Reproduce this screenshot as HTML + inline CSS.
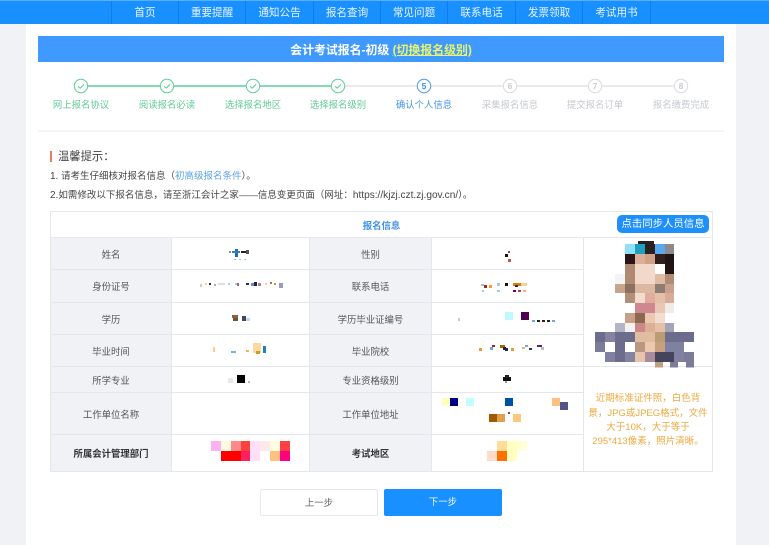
<!DOCTYPE html>
<html lang="zh-CN">
<head>
<meta charset="utf-8">
<title>会计考试报名</title>
<style>
html,body{margin:0;padding:0;width:769px;height:545px;overflow:hidden;background:#f0f2f5;}
#page{position:absolute;left:0;top:0;width:769px;height:545px;overflow:hidden;filter:blur(.35px);font-family:"Liberation Sans","Noto Sans CJK SC",sans-serif;color:#444;}
.a{position:absolute;white-space:nowrap;}
#nav{position:absolute;left:0;top:0;width:769px;height:24px;background:#1890ff;border-top:1px solid #5ab0ff;box-sizing:border-box;}
#nav span{position:absolute;top:0;height:23px;line-height:25px;text-align:center;font-size:10.6px;color:#eaf4ff;border-right:1px solid #0f7fe6;box-sizing:border-box;}
#wrap{position:absolute;left:26px;top:24px;width:710px;height:521px;background:#fff;}
#head{position:absolute;left:38px;top:36px;width:686px;height:26px;line-height:28px;background:#4099ff;color:#fff;font-size:11.9px;font-weight:bold;text-align:center;}
#head a{color:#e8f56a;text-decoration:underline;}
.st{position:absolute;top:98px;width:86px;text-align:center;font-size:9.4px;line-height:13px;}
.g{color:#62c996}.b{color:#4a94e0}.n{color:#c4c8ce}
table{position:absolute;left:50px;top:211px;width:663px;border-collapse:collapse;table-layout:fixed;font-size:9.4px;color:#555;}
td{border:1px solid #e4e7ed;padding:0;text-align:center;}
td.l{background:#f0f2f5;}
td.bd{font-weight:bold;color:#333;}
#sync{position:absolute;left:617px;top:215px;width:92px;height:18px;line-height:20px;border-radius:5px;background:#1f90fb;color:#fff;font-size:10.4px;text-align:center;}
.btn{position:absolute;top:489px;width:118px;height:27px;line-height:26px;box-sizing:border-box;border-radius:2px;text-align:center;font-size:9.4px;}
svg{position:absolute;left:0;top:0;}
</style>
</head>
<body>
<div id="page">
<div id="nav">
<span style="left:111px;width:68px;border-left:1px solid #0f7fe6">首页</span>
<span style="left:179px;width:67px">重要提醒</span>
<span style="left:246px;width:68px">通知公告</span>
<span style="left:314px;width:67px">报名查询</span>
<span style="left:381px;width:67px">常见问题</span>
<span style="left:448px;width:68px">联系电话</span>
<span style="left:516px;width:67px">发票领取</span>
<span style="left:583px;width:68px">考试用书</span>
</div>
<div id="wrap"></div>
<div id="head">会计考试报名-初级 <a>(切换报名级别)</a></div>

<svg width="769" height="545" viewBox="0 0 769 545" fill="none">
<line x1="81" y1="86" x2="338" y2="86" stroke="#3fc483" stroke-width="1.2"/>
<line x1="338" y1="86" x2="681" y2="86" stroke="#d4d6da" stroke-width="1"/>
<g fill="#fff" stroke="#5fd09a" stroke-width="1">
<circle cx="81" cy="86" r="6.7"/><circle cx="167" cy="86" r="6.7"/><circle cx="253" cy="86" r="6.7"/><circle cx="338" cy="86" r="6.7"/>
</g>
<g stroke="#5cc893" stroke-width="1" fill="none">
<path d="M78 86.2l2.2 2 3.8-3.8"/><path d="M164 86.2l2.2 2 3.8-3.8"/><path d="M250 86.2l2.2 2 3.8-3.8"/><path d="M335 86.2l2.2 2 3.8-3.8"/>
</g>
<circle cx="424" cy="86" r="6.7" fill="#fff" stroke="#4a9bf0" stroke-width="1"/>
<g fill="#fff" stroke="#d8dade" stroke-width="1">
<circle cx="510" cy="86" r="6.7"/><circle cx="595" cy="86" r="6.7"/><circle cx="681" cy="86" r="6.7"/>
</g>
<g font-family="Liberation Sans,sans-serif" font-size="8.5" text-anchor="middle" font-weight="bold">
<text x="424" y="89" fill="#3d8fe8">5</text>
<text x="510" y="89" fill="#c8cbd0">6</text>
<text x="595" y="89" fill="#c8cbd0">7</text>
<text x="681" y="89" fill="#c8cbd0">8</text>
</g>
<rect x="38" y="130.5" width="686" height="1.2" fill="#eceef1"/>
</svg>

<div class="st g" style="left:38px">网上报名协议</div>
<div class="st g" style="left:124px">阅读报名必读</div>
<div class="st g" style="left:210px">选择报名地区</div>
<div class="st g" style="left:295px">选择报名级别</div>
<div class="st b" style="left:381px">确认个人信息</div>
<div class="st n" style="left:467px">采集报名信息</div>
<div class="st n" style="left:552px">提交报名订单</div>
<div class="st n" style="left:638px">报名缴费完成</div>

<div class="a" style="left:50px;top:151px;width:2.4px;height:11px;background:#ea7a68"></div>
<div class="a" style="left:58px;top:148.5px;font-size:11.3px;line-height:16px;color:#444">温馨提示：</div>
<div class="a" style="left:50px;top:170px;font-size:9.5px;line-height:13px;color:#444"><span style="font-size:10px">1.</span> 请考生仔细核对报名信息（<span style="color:#5aa0e6">初高级报名条件</span>）。</div>
<div class="a" style="left:50px;top:188.5px;font-size:9.5px;line-height:13px;color:#444"><span style="font-size:10px">2.</span>如需修改以下报名信息，请至浙江会计之家——信息变更页面（网址：<span style="font-size:10.1px">https://kjzj.czt.zj.gov.cn/</span>）。</div>

<table>
<colgroup><col style="width:121px"><col style="width:138px"><col style="width:122px"><col style="width:152px"><col style="width:129px"></colgroup>
<tr style="height:26px"><td colspan="5" style="font-weight:bold;color:#3f92e6">报名信息</td></tr>
<tr style="height:32px"><td class="l">姓名</td><td></td><td class="l">性别</td><td></td><td rowspan="4"></td></tr>
<tr style="height:33px"><td class="l">身份证号</td><td></td><td class="l">联系电话</td><td></td></tr>
<tr style="height:32px"><td class="l">学历</td><td></td><td class="l">学历毕业证编号</td><td></td></tr>
<tr style="height:32px"><td class="l">毕业时间</td><td></td><td class="l">毕业院校</td><td></td></tr>
<tr style="height:26px"><td class="l">所学专业</td><td></td><td class="l">专业资格级别</td><td></td>
<td rowspan="3" style="color:#efa83e;line-height:14.3px;padding:4px 0 0;font-size:9.5px;white-space:nowrap">近期标准证件照，白色背<br>景，JPG或JPEG格式，文件<br>大于10K，大于等于<br>295*413像素，照片清晰。</td></tr>
<tr style="height:42px"><td class="l">工作单位名称</td><td></td><td class="l">工作单位地址</td><td></td></tr>
<tr style="height:37px"><td class="l bd">所属会计管理部门</td><td></td><td class="l bd">考试地区</td><td></td></tr>
</table>
<div id="sync">点击同步人员信息</div>

<svg width="769" height="545" viewBox="0 0 769 545" shape-rendering="crispEdges">
<!-- 头像 -->
<rect x="638" y="241" width="16" height="3" fill="#262022"/>
<rect x="625" y="244" width="10" height="10" fill="#8fe0f8"/><rect x="635" y="244" width="10" height="10" fill="#20a0c0"/><rect x="645" y="244" width="10" height="10" fill="#2a2020"/><rect x="655" y="244" width="10" height="10" fill="#5aa8f0"/><rect x="665" y="244" width="9" height="10" fill="#8f8a8a"/>
<rect x="625" y="254" width="10" height="10" fill="#2a1518"/><rect x="635" y="254" width="10" height="10" fill="#dcb098"/><rect x="645" y="254" width="10" height="10" fill="#d0a088"/><rect x="655" y="254" width="10" height="10" fill="#30201c"/><rect x="665" y="254" width="9" height="10" fill="#201414"/>
<rect x="625" y="264" width="10" height="10" fill="#b08a70"/><rect x="635" y="264" width="20" height="10" fill="#f2d8c8"/><rect x="665" y="264" width="9" height="10" fill="#201414"/>
<rect x="615" y="274" width="10" height="10" fill="#f4f4f4"/><rect x="625" y="274" width="10" height="10" fill="#b08a70"/><rect x="635" y="274" width="20" height="10" fill="#f2d8c8"/><rect x="655" y="274" width="10" height="10" fill="#e0bca4"/><rect x="665" y="274" width="9" height="10" fill="#b08c74"/>
<rect x="615" y="284" width="10" height="9" fill="#c8a48c"/><rect x="625" y="284" width="10" height="9" fill="#8c7060"/><rect x="635" y="284" width="20" height="9" fill="#dcb8a0"/><rect x="655" y="284" width="10" height="9" fill="#8c7c74"/><rect x="665" y="284" width="9" height="9" fill="#c8a08c"/>
<rect x="625" y="293" width="10" height="10" fill="#b09078"/><rect x="635" y="293" width="10" height="10" fill="#f4dccc"/><rect x="645" y="293" width="10" height="10" fill="#e0aca0"/><rect x="655" y="293" width="10" height="10" fill="#e4c0a8"/><rect x="665" y="293" width="9" height="10" fill="#d8ac98"/>
<rect x="635" y="303" width="20" height="10" fill="#d08890"/><rect x="655" y="303" width="10" height="10" fill="#e8c8b4"/><rect x="665" y="303" width="9" height="10" fill="#f0ece8"/>
<rect x="625" y="313" width="10" height="10" fill="#c8a088"/><rect x="635" y="313" width="10" height="10" fill="#8c6850"/><rect x="645" y="313" width="10" height="10" fill="#ecc8b4"/><rect x="655" y="313" width="10" height="10" fill="#f4dcd0"/>
<rect x="615" y="323" width="10" height="9" fill="#b4b4c8"/><rect x="625" y="323" width="10" height="9" fill="#f4f2f0"/><rect x="635" y="323" width="10" height="9" fill="#cc8888"/><rect x="645" y="323" width="10" height="9" fill="#dcb094"/><rect x="655" y="323" width="10" height="9" fill="#e4c0a8"/><rect x="665" y="323" width="9" height="9" fill="#a4a4b8"/>
<rect x="595" y="332" width="10" height="10" fill="#6c6c8c"/><rect x="605" y="332" width="10" height="10" fill="#8484a0"/><rect x="615" y="332" width="20" height="10" fill="#6c6c8c"/><rect x="635" y="332" width="20" height="10" fill="#e0bca0"/><rect x="655" y="332" width="10" height="10" fill="#bc9c74"/><rect x="665" y="332" width="29" height="10" fill="#6c6c8c"/>
<rect x="595" y="342" width="10" height="10" fill="#7c7c98"/><rect x="615" y="342" width="10" height="10" fill="#6c6c8c"/><rect x="635" y="342" width="10" height="10" fill="#b89880"/><rect x="645" y="342" width="10" height="10" fill="#ecc8b0"/><rect x="655" y="342" width="10" height="10" fill="#c8a080"/><rect x="665" y="342" width="19" height="10" fill="#8080a0"/>
<rect x="605" y="352" width="10" height="10" fill="#8080a0"/><rect x="615" y="352" width="10" height="10" fill="#6c6c8c"/><rect x="625" y="352" width="10" height="10" fill="#8484a0"/><rect x="635" y="352" width="10" height="10" fill="#e8c4ac"/><rect x="645" y="352" width="10" height="10" fill="#a88c9c"/><rect x="655" y="352" width="19" height="10" fill="#44445c"/><rect x="674" y="352" width="10" height="10" fill="#8080a0"/><rect x="684" y="352" width="10" height="10" fill="#7c7c98"/>
<rect x="655" y="362" width="8" height="5.5" fill="#c0a080"/><rect x="670" y="362" width="8" height="5.5" fill="#7c7c98"/><rect x="686" y="362" width="8" height="5.5" fill="#7c7c98"/>
<!-- 姓名 -->
<rect x="229" y="251" width="2" height="2" fill="#888"/><rect x="235" y="249" width="3" height="8" fill="#2070b0"/><rect x="232" y="251" width="8" height="2" fill="#3080c0"/><rect x="241" y="251" width="8" height="2" fill="#222"/><rect x="246" y="250" width="3" height="4" fill="#555"/><rect x="234" y="259" width="2" height="1" fill="#8cc"/><rect x="239" y="259" width="2" height="1" fill="#8cc"/><rect x="244" y="259" width="2" height="1" fill="#8cc"/>
<!-- 身份证号 -->
<rect x="200" y="284" width="2" height="3" fill="#ccc"/><rect x="205" y="283" width="2" height="2" fill="#fc9"/><rect x="209" y="283" width="2" height="2" fill="#333"/><rect x="214" y="284" width="2" height="2" fill="#aac"/><rect x="218" y="283" width="7" height="2" fill="#ddd"/><rect x="228" y="283" width="2" height="2" fill="#ace"/><rect x="235" y="283" width="2" height="2" fill="#ace"/><rect x="237" y="283" width="2" height="3" fill="#a66"/><rect x="246" y="283" width="3" height="2" fill="#333"/><rect x="251" y="283" width="3" height="3" fill="#68c"/><rect x="254" y="282" width="3" height="4" fill="#224"/><rect x="258" y="283" width="3" height="3" fill="#a88"/><rect x="265" y="283" width="2" height="2" fill="#fc9"/><rect x="270" y="282" width="2" height="2" fill="#a66"/><rect x="274" y="283" width="2" height="2" fill="#c93"/><rect x="279" y="283" width="4" height="5" fill="#99b"/>
<!-- 学历 -->
<rect x="232" y="315" width="6" height="3" fill="#864"/><rect x="233" y="318" width="5" height="3" fill="#654"/><rect x="242" y="316" width="4" height="5" fill="#446"/><rect x="246" y="318" width="4" height="3" fill="#bde"/>
<!-- 毕业时间 -->
<rect x="213" y="347" width="2" height="5" fill="#fc8"/><rect x="231" y="351" width="5" height="2" fill="#6bd"/><rect x="246" y="350" width="3" height="2" fill="#fa5"/><rect x="253" y="343" width="8" height="10" fill="#fdd9a0"/><rect x="256" y="351" width="4" height="3" fill="#c93"/><rect x="263" y="346" width="3" height="7" fill="#2080c0"/>
<!-- 所学专业 -->
<rect x="228" y="378" width="5" height="5" fill="#e8e8e8"/><rect x="237" y="375" width="8" height="8" fill="#000"/><rect x="248" y="381" width="2" height="2" fill="#bbb"/>
<!-- 所属 -->
<rect x="211" y="441" width="10" height="10" fill="#ffb0f0"/><rect x="221" y="441" width="10" height="10" fill="#fffae0"/><rect x="231" y="441" width="10" height="10" fill="#ff8888"/><rect x="241" y="441" width="9" height="10" fill="#ff4040"/><rect x="250" y="441" width="10" height="10" fill="#ffe0f8"/><rect x="260" y="441" width="10" height="10" fill="#ffe8e8"/><rect x="270" y="441" width="10" height="10" fill="#fffce0"/><rect x="280" y="441" width="10" height="10" fill="#ff4040"/>
<rect x="221" y="451" width="20" height="10" fill="#ff0000"/><rect x="241" y="451" width="9" height="10" fill="#ff2060"/><rect x="250" y="451" width="10" height="10" fill="#ffe0f8"/><rect x="270" y="451" width="10" height="10" fill="#ffc080"/><rect x="280" y="451" width="10" height="10" fill="#ff0080"/>
<!-- 性别 -->
<rect x="505" y="254" width="3" height="3" fill="#111"/><rect x="508" y="251" width="2" height="2" fill="#a44"/><rect x="508" y="259" width="3" height="3" fill="#b06050"/>
<!-- 联系电话 -->
<rect x="481" y="284" width="3" height="2" fill="#bbb"/><rect x="484" y="285" width="3" height="3" fill="#a22"/><rect x="489" y="285" width="3" height="3" fill="#f93"/><rect x="497" y="283" width="3" height="3" fill="#9ce"/><rect x="505" y="283" width="3" height="3" fill="#111"/><rect x="513" y="283" width="8" height="3" fill="#c80"/><rect x="515" y="285" width="3" height="2" fill="#606"/><rect x="521" y="283" width="6" height="3" fill="#fc9"/><rect x="482" y="290" width="2" height="2" fill="#9ce"/><rect x="497" y="290" width="3" height="2" fill="#9ce"/><rect x="513" y="290" width="3" height="2" fill="#606"/><rect x="518" y="290" width="3" height="2" fill="#a44"/><rect x="523" y="290" width="3" height="2" fill="#fa7"/>
<!-- 学历证书编号 -->
<rect x="458" y="318" width="2" height="3" fill="#ccc"/><rect x="505" y="312" width="8" height="8" fill="#c0f8ff"/><rect x="521" y="312" width="8" height="8" fill="#500050"/><rect x="532" y="320" width="3" height="2" fill="#6ae"/><rect x="537" y="320" width="3" height="2" fill="#222"/><rect x="542" y="320" width="3" height="2" fill="#222"/><rect x="547" y="320" width="3" height="2" fill="#222"/><rect x="552" y="320" width="3" height="2" fill="#6ae"/>
<!-- 毕业院校 -->
<rect x="479" y="348" width="3" height="3" fill="#e93"/><rect x="490" y="347" width="3" height="3" fill="#6ae"/><rect x="492" y="345" width="3" height="2" fill="#a22"/><rect x="500" y="345" width="5" height="3" fill="#a60"/><rect x="503" y="347" width="3" height="3" fill="#222"/><rect x="505" y="348" width="3" height="3" fill="#226"/><rect x="511" y="348" width="3" height="3" fill="#e93"/><rect x="522" y="347" width="3" height="2" fill="#fa5"/><rect x="525" y="345" width="3" height="2" fill="#6ae"/><rect x="529" y="348" width="3" height="2" fill="#335"/><rect x="537" y="345" width="5" height="2" fill="#528"/><rect x="541" y="347" width="3" height="3" fill="#bbb"/>
<!-- 专业资格级别 -->
<rect x="503" y="377" width="8" height="4" fill="#111"/><rect x="505" y="375" width="4" height="3" fill="#222"/><rect x="505" y="381" width="2" height="2" fill="#999"/>
<!-- 工作单位地址 -->
<rect x="442" y="398" width="8" height="8" fill="#ffffc0"/><rect x="450" y="398" width="8" height="8" fill="#000080"/><rect x="466" y="398" width="8" height="8" fill="#c0ffff"/><rect x="505" y="398" width="8" height="8" fill="#0050a0"/><rect x="552" y="398" width="8" height="8" fill="#ffc080"/><rect x="560" y="402" width="8" height="8" fill="#558"/>
<rect x="489" y="414" width="8" height="8" fill="#a05a00"/><rect x="497" y="414" width="8" height="8" fill="#e0a050"/><rect x="508" y="412" width="2" height="2" fill="#844"/><rect x="513" y="414" width="8" height="8" fill="#ffc880"/>
<!-- 考试地区 -->
<rect x="497" y="441" width="10" height="10" fill="#ffdc98"/><rect x="507" y="441" width="10" height="10" fill="#ffffc0"/><rect x="517" y="441" width="10" height="10" fill="#ffffd8"/>
<rect x="487" y="451" width="10" height="10" fill="#ffdcc8"/><rect x="497" y="451" width="10" height="10" fill="#ff7000"/><rect x="507" y="451" width="10" height="10" fill="#ffffc0"/>
</svg>

<div class="btn" style="left:260px;background:#fff;border:1px solid #e6e8ec;color:#666">上一步</div>
<div class="btn" style="left:384px;background:#1890ff;color:#eef6ff">下一步</div>
</div>
</body>
</html>
